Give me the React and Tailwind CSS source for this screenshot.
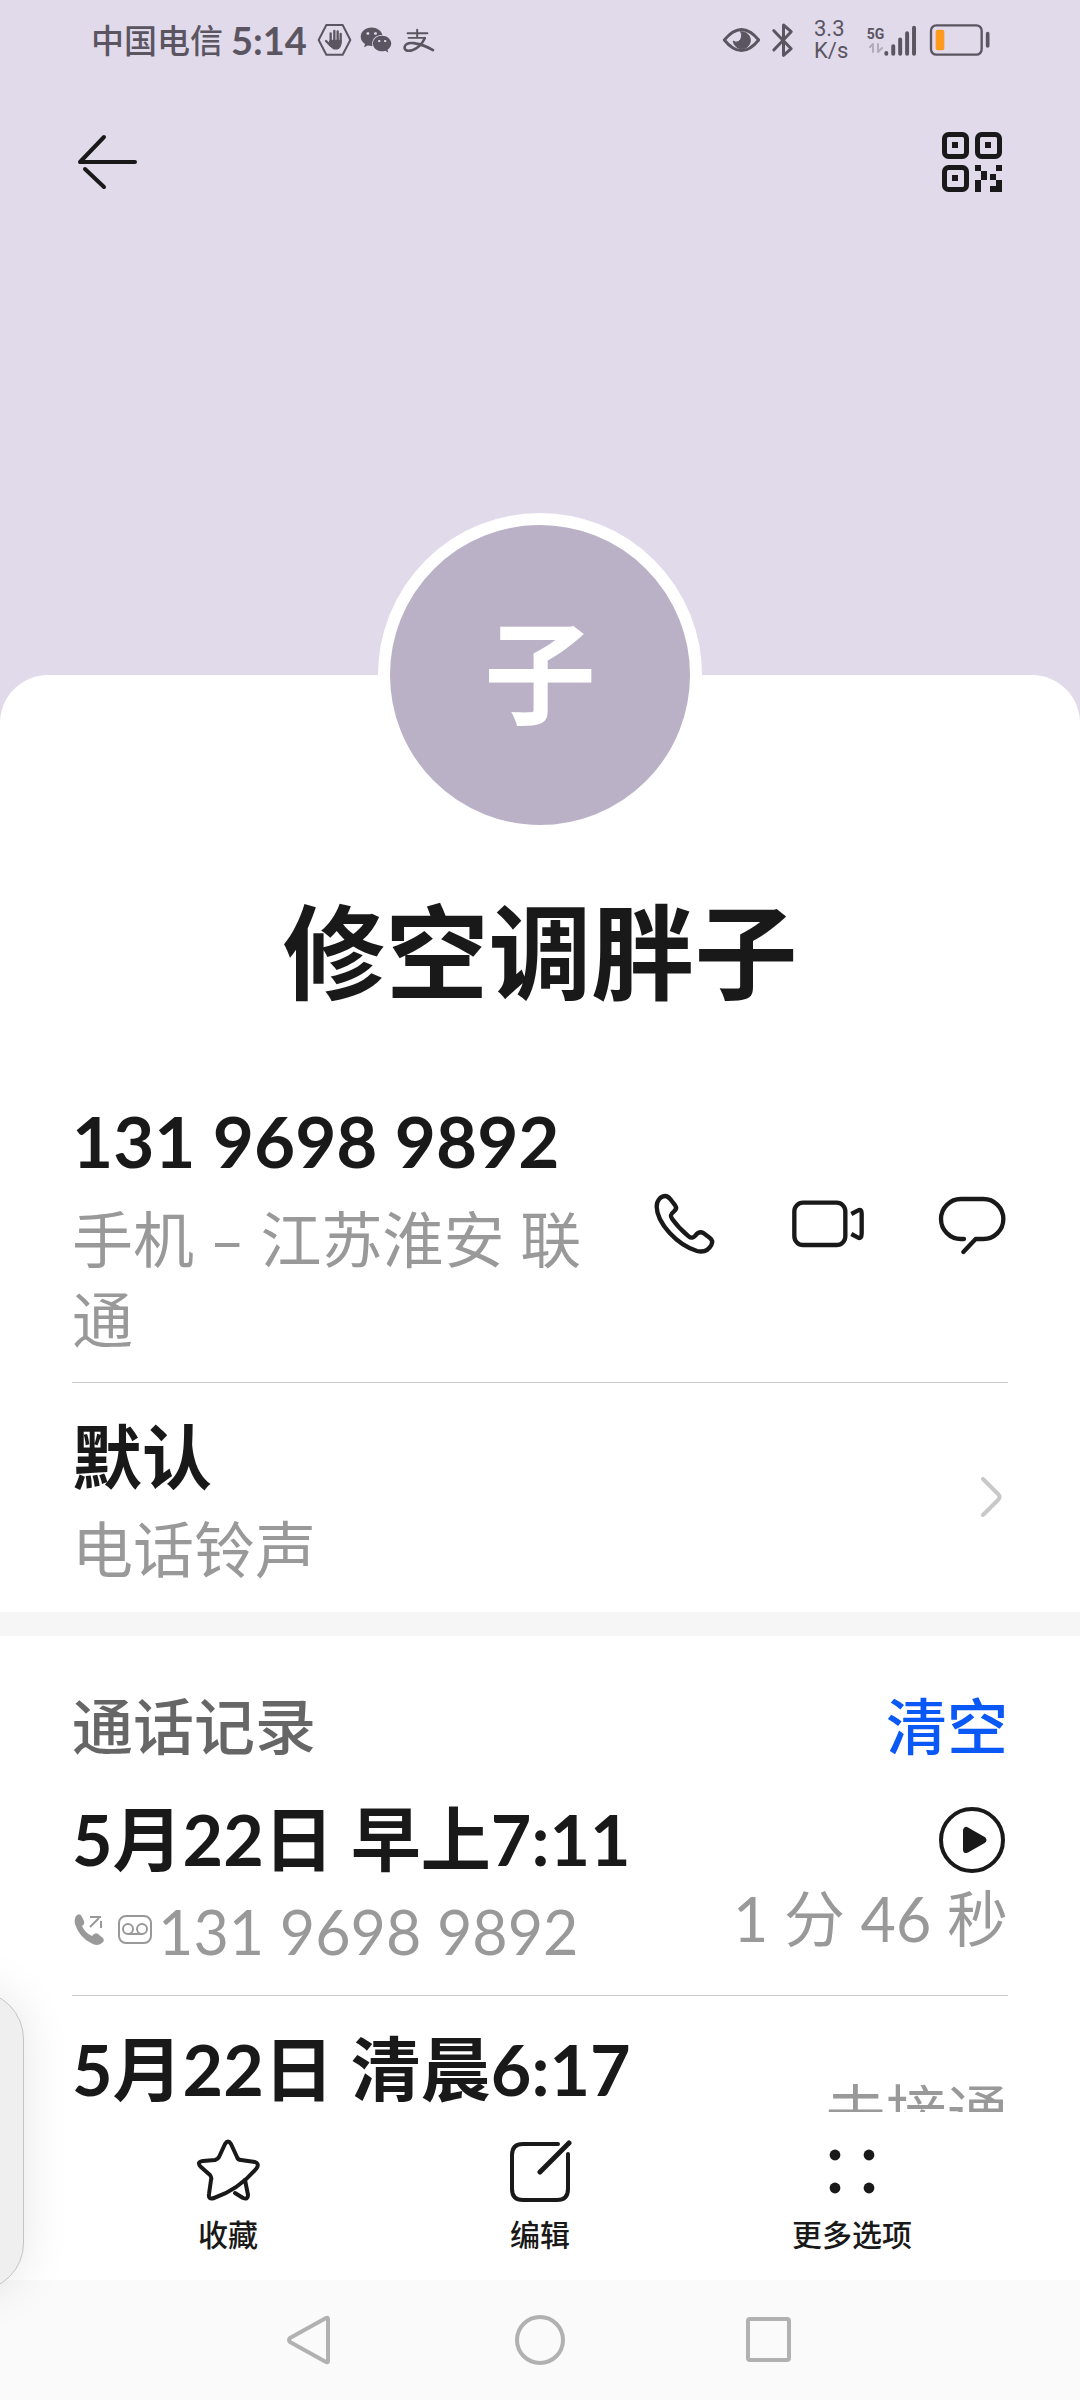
import { FaWeixin } from 'react-icons/fa';

const chamadas = [
  { id: 1, data: '5月22日 早上7:11', numero: '131 9698 9892', duracao: '1 分 46 秒', gravada: true },
  { id: 2, data: '5月22日 清晨6:17', numero: '131 9698 9892', duracao: '未接通', gravada: false },
];

const traco = {
  fill: 'none',
  stroke: 'currentColor',
  strokeLinecap: 'round',
  strokeLinejoin: 'round',
};

function BarraEstado() {
  return (
    <div className="flex h-20 shrink-0 items-center justify-between pl-[91px] pr-[89px] text-[#5b5561]">
      <div className="flex items-center">
        <span className="text-[33px] leading-[40px] font-medium">中国电信</span>
        <span className="ml-2 text-[38px] leading-[40px] font-bold">5:14</span>
        <svg viewBox="770 66 105 102" className="ml-2.5 h-[34px] w-[35px]" {...traco}>
          <path d="M798 72H847L870 117L847 161H798L775 117Z" strokeWidth="6" />
          <path d="M811 97V122M822 90V122M832 91V122M841 99V124M797 120L811 134" strokeWidth="7" />
          <path d="M810 118H842V130Q840 142 832 144H820Q812 140 806 130Z" fill="currentColor" strokeWidth="3" />
        </svg>
        <FaWeixin className="ml-2 size-8" />
        <svg viewBox="1028 76 100 82" className="ml-2.5 h-[27px] w-[33px]" {...traco}>
          <path d="M1045 95H1105M1074 84V108M1048 109H1098" strokeWidth="6" />
          <path d="M1097 110Q1084 138 1058 147Q1034 152 1036 136Q1040 122 1064 125Q1094 130 1122 146" strokeWidth="8" />
        </svg>
      </div>
      <div className="flex items-center">
        <svg viewBox="64 76 118 84" className="h-[28px] w-[39px]" {...traco}>
          <path d="M71 118Q123 54 175 118Q123 182 71 118Z" strokeWidth="9" />
          <path d="M121 93A26 26 0 1 1 98 121Q106 128 115 122Q128 112 121 93Z" fill="currentColor" strokeWidth="3" />
        </svg>
        <svg viewBox="212 62 68 108" className="ml-2.5 h-[36px] w-[23px]" {...traco}>
          <path d="M220 88L272 142L249 162V71L272 91L220 146" strokeWidth="9" />
        </svg>
        <span className="ml-5 w-[37px] font-['Roboto'] text-[22px] leading-[22px]">
          3.3
          <br />
          K/s
        </span>
        <span className="ml-4 flex w-[17px] flex-col items-center">
          <span className="font-['Roboto'] text-[14px] leading-[16px] font-bold">5G</span>
          <svg viewBox="0 0 16 12" className="h-3 w-4 opacity-35" {...traco} strokeWidth="2">
            <path d="M2 5L5 2V10M10 2V10L14 6" />
          </svg>
        </span>
        <svg viewBox="554 66 100 100" className="h-[33px] w-[33px]" {...traco} strokeWidth="12">
          <path d="M561 154V156M582 133V156M603 113V156M624 94V156M645 77V156" />
        </svg>
        <svg viewBox="686 68 186 102" className="ml-3 h-[34px] w-[62px]" {...traco}>
          <rect x="692" y="75" width="152" height="88" rx="16" strokeWidth="7" />
          <path d="M862 100V137" strokeWidth="11" />
          <rect x="706" y="88" width="26" height="62" rx="6" fill="#ff9a1f" stroke="none" />
        </svg>
      </div>
    </div>
  );
}

function Cabecalho() {
  return (
    <header className="flex h-[164px] shrink-0 items-center justify-between px-[72px]">
      <button aria-label="返回">
        <svg viewBox="0 0 72 72" className="size-[72px]" {...traco} strokeWidth="4">
          <path d="M32 11L8 36H63" />
          <path d="M13 43L32 61" />
        </svg>
      </button>
      <button aria-label="二维码">
        <svg viewBox="0 0 72 72" className="size-[72px]" fill="currentColor">
          <g fill="none" stroke="currentColor" strokeWidth="5">
            <rect x="8.5" y="8.5" width="22" height="22" rx="4" />
            <rect x="41.5" y="8.5" width="22" height="22" rx="4" />
            <rect x="8.5" y="41.5" width="22" height="22" rx="4" />
          </g>
          <path d="M16 16h6v6h-6zM49 16h6v6h-6zM16 49h6v6h-6z" />
          <path d="M39 39h6v6h6v9h-6v-9h-6zM60 39h6v6h-6zM54 48h6v6h-6zM60 54h6v12h-12v-6h6zM39 54h6v12h-6z" />
        </svg>
      </button>
    </header>
  );
}

function LinhaTelefone() {
  return (
    <section className="mx-[72px] flex items-center border-b border-[#cccccc] pt-[74px] pb-[22px]">
      <div className="min-w-0 flex-1">
        <p className="text-[71px] leading-[90px] font-bold">131 9698 9892</p>
        <p className="mt-3.5 text-[61px] leading-[80px] text-[#999999]">手机 – 江苏淮安 联通</p>
      </div>
      <div className="-mr-9 flex shrink-0 pb-2">
        <button aria-label="拨打电话" className="flex w-36 justify-center">
          <svg viewBox="53 54 216 216" className="size-[72px]" {...traco} strokeWidth="13">
            <path d="M79 110C79 90 92 78 105 78C113 78 117 84 122 90L135 107C140 114 137 119 131 124C121 132 119 138 125 146C140 167 158 185 175 199C183 206 190 203 195 197C202 188 209 184 219 189L238 203C246 209 247 217 243 225C234 242 220 248 200 243C140 224 80 160 79 110Z" />
          </svg>
        </button>
        <button aria-label="视频通话" className="flex w-36 justify-center">
          <svg viewBox="486 54 216 216" className="size-[72px]" {...traco} strokeWidth="13">
            <rect x="493" y="98" width="153" height="127" rx="26" />
            <path d="M664 132L683 122Q695 115 695 130V190Q695 209 683 202L664 192" strokeLinecap="butt" />
          </svg>
        </button>
        <button aria-label="发送信息" className="flex w-36 justify-center">
          <svg viewBox="918 54 216 216" className="size-[72px]" {...traco} strokeWidth="13">
            <path d="M1002 207H993A60 60 0 0 1 993 87H1060A60 60 0 0 1 1060 207H1037L1000 246" />
          </svg>
        </button>
      </div>
    </section>
  );
}

function LinhaToque() {
  return (
    <button className="flex w-full items-center justify-between px-[72px] pt-[29px] pb-[22px] text-left">
      <span className="flex flex-col gap-2">
        <span className="text-[70px] leading-[90px] font-bold">默认</span>
        <span className="text-[61px] leading-[80px] text-[#999999]">电话铃声</span>
      </span>
      <span className="pr-1 pb-2 text-[#c8c8c8]">
        <svg viewBox="0 0 24 40" className="h-10 w-6" {...traco} strokeWidth="4">
          <path d="M3 2L18 17Q21 20 18 23L3 38" />
        </svg>
      </span>
    </button>
  );
}

function Chamada({ chamada }) {
  return (
    <li className="flex items-center justify-between border-b border-[#cccccc] pt-[28px] pb-[23px]">
      <div>
        <p className="text-[70px] leading-[90px] font-bold">{chamada.data}</p>
        <p className="mt-2 flex items-center text-[61px] leading-[80px] text-[#999999]">
          <svg viewBox="0 0 32 32" className="mb-1.5 size-8" fill="currentColor">
            <path d="M4 3Q8 -1 10 4L12 8Q13 11 10 13Q13 20 20 23Q23 19 26 21L31 25Q33 28 30 30Q25 34 19 30Q7 24 3 11Q2 6 4 3Z" />
            <path d="M18 4H29M29 8V15M18 14L27 5" fill="none" stroke="currentColor" strokeWidth="2" />
          </svg>
          <svg viewBox="0 0 34 32" className="mb-1.5 ml-3.5 h-8 w-[34px]" {...traco} strokeWidth="2">
            <rect x="1" y="3" width="32" height="27" rx="7" />
            <circle cx="10" cy="16" r="5" />
            <circle cx="24" cy="16" r="5" />
            <path d="M10 21H24" />
          </svg>
          <span className="ml-1.5">{chamada.numero}</span>
        </p>
      </div>
      <div className="flex flex-col items-end gap-1.5">
        {chamada.gravada && (
          <button aria-label="播放录音" className="mr-[3px]">
            <svg viewBox="1017 78 198 198" className="size-[66px]" {...traco}>
              <circle cx="1116" cy="177" r="93" strokeWidth="12" />
              <path d="M1099 148V206L1149 177Z" fill="currentColor" strokeWidth="20" />
            </svg>
          </button>
        )}
        <span className="text-[61px] leading-[80px] text-[#999999]">{chamada.duracao}</span>
      </div>
    </li>
  );
}

function BarraAcoes() {
  return (
    <nav className="grid h-[168px] shrink-0 grid-cols-3 bg-white px-[72px] pt-[26px] text-[30px] leading-[40px] font-medium">
      <button className="flex flex-col items-center gap-3">
        <svg viewBox="196 168 64 64" className="size-16" {...traco} strokeWidth="4">
          <path d="M225 174Q228 169 231 174L237 187Q238 190 241 190L255 192Q260 194 256 199Q238 220 214 228Q208 230 209 224L211 210Q212 208 210 205L201 197Q196 192 203 191L215 190Q218 189 219 187Z" />
          <path d="M245 210L248 225Q248 230 243 228L235 223" />
        </svg>
        收藏
      </button>
      <button className="flex flex-col items-center gap-3">
        <svg viewBox="508 168 64 64" className="size-16" {...traco} strokeWidth="4">
          <path d="M558 174H523Q512 174 512 185V219Q512 230 523 230H557Q568 230 568 219V184" />
          <path d="M569 173L540 202" strokeWidth="5" />
        </svg>
        编辑
      </button>
      <button className="flex flex-col items-center gap-3">
        <svg viewBox="0 0 64 64" className="size-16" fill="currentColor">
          <circle cx="15" cy="17" r="5.4" />
          <circle cx="49" cy="17" r="5.4" />
          <circle cx="15" cy="50" r="5.4" />
          <circle cx="49" cy="50" r="5.4" />
        </svg>
        更多选项
      </button>
    </nav>
  );
}

function BarraSistema() {
  return (
    <div className="flex h-[120px] shrink-0 items-center justify-center bg-[#fafafa] text-[#b1b1b1]">
      <button aria-label="后退" className="flex w-[230px] justify-center">
        <svg viewBox="0 0 52 52" className="size-[52px]" {...traco} strokeWidth="4">
          <path d="M42 4Q44 3 44 5V47Q44 49 42 48L6 28Q4 26 6 24Z" />
        </svg>
      </button>
      <button aria-label="主屏幕" className="flex w-[230px] justify-center">
        <svg viewBox="0 0 52 52" className="size-[52px]" {...traco} strokeWidth="4">
          <circle cx="26" cy="26" r="23" />
        </svg>
      </button>
      <button aria-label="最近任务" className="flex w-[230px] justify-center">
        <svg viewBox="0 0 52 52" className="size-[52px]" {...traco} strokeWidth="4">
          <rect x="4" y="5" width="41" height="41" rx="2" />
        </svg>
      </button>
    </div>
  );
}

function App() {
  return (
    <div className="relative flex h-screen flex-col overflow-hidden bg-[#e0daeb] font-['Lato','Noto_Sans_CJK_SC',sans-serif] text-[#191919]">
      <BarraEstado />
      <Cabecalho />

      <main className="mt-[431px] flex min-h-0 flex-1 flex-col rounded-t-[48px] bg-white">
        <div className="-mt-[162px] flex size-[324px] shrink-0 items-center justify-center self-center rounded-full border-12 border-white bg-[#bab1c7] pb-1 text-[112px] leading-[140px] font-bold text-white">
          子
        </div>
        <div className="min-h-0 flex-1 overflow-hidden">
          <h1 className="mt-[45px] text-center text-[103px] leading-[140px] font-bold">修空调胖子</h1>
          <LinhaTelefone />
          <LinhaToque />
          <section className="border-t-24 border-[#f6f6f6] px-[72px]">
            <div className="flex items-center justify-between pt-[52px] text-[61px] leading-[78px] font-medium">
              <h2 className="text-[#666666]">通话记录</h2>
              <button className="text-[#0a59f7]">清空</button>
            </div>
            <ul>
              {chamadas.map((chamada) => (
                <Chamada key={chamada.id} chamada={chamada} />
              ))}
            </ul>
          </section>
        </div>
      </main>

      <BarraAcoes />
      <BarraSistema />

      {/* painel lateral recolhido */}
      <div className="absolute bottom-[109px] -left-[96px] h-[300px] w-[120px] rounded-[48px] border border-[#c4c4c4] bg-[#efefef] shadow-[0_0_48px_rgba(0,0,0,0.1)]" />
    </div>
  );
}

export default App;
